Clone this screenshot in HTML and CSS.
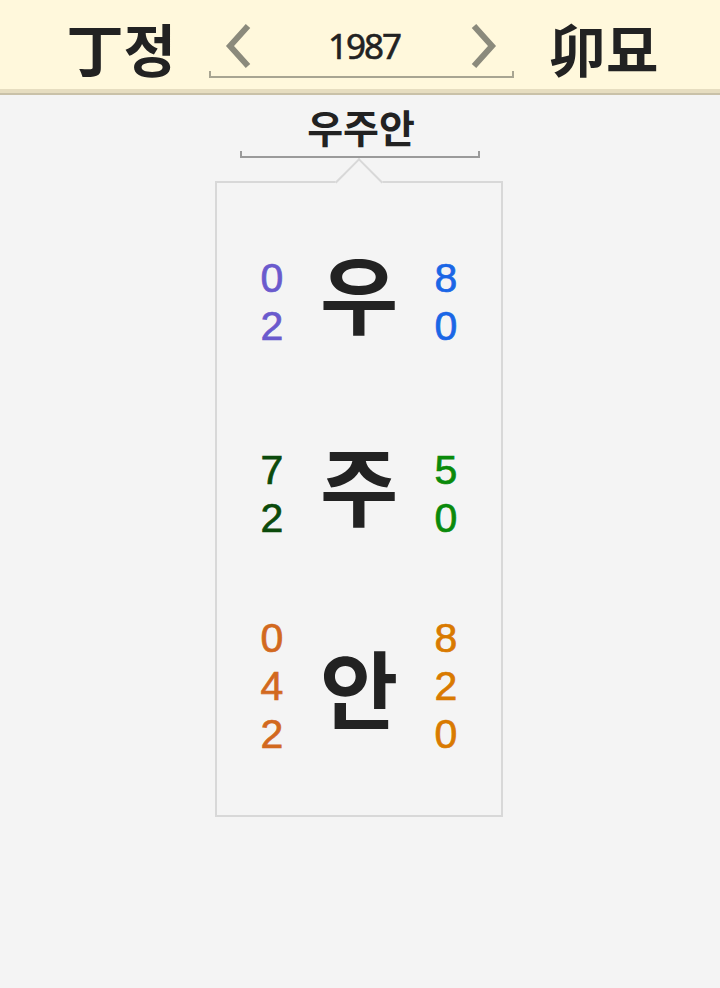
FILE: index.html
```html
<!DOCTYPE html>
<html lang="ko">
<head>
<meta charset="utf-8">
<link rel="stylesheet" href="styles.css">
</head>
<body>
<header class="top">
  <div class="gz">丁정</div>
  <div class="nav">
    <div class="nav-row">
      <svg class="chev" viewBox="0 0 28 46" width="28" height="46"><path d="M23 3 L5 23 L23 43" fill="none" stroke="#8b8a7c" stroke-width="6"/></svg>
      <span class="year">1987</span>
      <svg class="chev" viewBox="0 0 28 46" width="28" height="46"><path d="M5 3 L23 23 L5 43" fill="none" stroke="#8b8a7c" stroke-width="6"/></svg>
    </div>
    <div class="nav-bracket"></div>
  </div>
  <div class="gz">卯묘</div>
</header>
<main class="main">
  <div class="title">우주안</div>
  <div class="title-bracket"></div>
  <div class="card">
    <div class="row">
      <div class="col"><span class="c-purple">0</span><span class="c-purple">2</span></div>
      <div class="ch ch-up">우</div>
      <div class="col"><span class="c-blue">8</span><span class="c-blue">0</span></div>
    </div>
    <div class="row">
      <div class="col"><span class="c-dgreen">7</span><span class="c-dgreen">2</span></div>
      <div class="ch ch-up">주</div>
      <div class="col"><span class="c-green">5</span><span class="c-green">0</span></div>
    </div>
    <div class="row">
      <div class="col"><span class="c-orange">0</span><span class="c-orange">4</span><span class="c-orange">2</span></div>
      <div class="ch">안</div>
      <div class="col"><span class="c-amber">8</span><span class="c-amber">2</span><span class="c-amber">0</span></div>
    </div>
  </div>
</main>
</body>
</html>
```
FILE: styles.css
```css
html, body {
  margin: 0;
  padding: 0;
}
body {
  background: #f4f4f4;
  font-family: "Noto Sans", "Noto Sans CJK KR", sans-serif;
  color: #222;
  width: 720px;
  height: 988px;
  overflow: hidden;
}
.top {
  height: 89px;
  background: #fff8dc;
  display: flex;
  justify-content: center;
  align-items: center;
  padding-left: 5px;
  border-bottom: 4px solid #e6ddc0;
  box-shadow: 0 2px 0 #c9c1a8;
}
.gz {
  font-family: "Noto Sans CJK KR", sans-serif;
  font-weight: 700;
  font-size: 57px;
  line-height: 60px;
  color: #222;
  margin-top: 4px;
}
.nav {
  width: 305px;
  margin: 10px 35px 0 33px;
  display: flex;
  flex-direction: column;
}
.nav-row {
  height: 50px;
  display: flex;
  align-items: center;
  justify-content: space-between;
  padding: 0 17px 0 16px;
}
.chev {
  display: block;
}
.year {
  font-family: "Noto Sans", sans-serif;
  font-size: 35px;
  letter-spacing: -2px;
  line-height: 40px;
  color: #222;
  margin-left: 6px;
  -webkit-text-stroke: 0.6px #222;
}
.nav-bracket {
  height: 5px;
  border: 2px solid #a8a592;
  border-top: none;
}
.main {
  display: flex;
  flex-direction: column;
  align-items: center;
  padding-top: 8px;
}
.title {
  font-family: "Noto Sans CJK KR", sans-serif;
  font-weight: 700;
  font-size: 39px;
  line-height: 50px;
  color: #222;
  margin-left: 2px;
}
.title-bracket {
  width: 236px;
  height: 5px;
  border: 2px solid #9a9a9a;
  border-top: none;
}
.card {
  position: relative;
  margin-top: 23px;
  margin-left: -2px;
  width: 288px;
  height: 636px;
  border: 2px solid #d8d8d8;
  padding-top: 23px;
  box-sizing: border-box;
  display: flex;
  flex-direction: column;
}
.card::before {
  content: "";
  position: absolute;
  left: 50%;
  top: -18px;
  width: 32px;
  height: 32px;
  margin-left: -17px;
  background: #f4f4f4;
  border-top: 2px solid #d8d8d8;
  border-left: 2px solid #d8d8d8;
  transform: rotate(45deg);
}
.row {
  height: 192px;
  display: flex;
  align-items: center;
  justify-content: center;
  gap: 17px;
}
.col {
  width: 40px;
  display: flex;
  flex-direction: column;
  align-items: center;
  font-family: "Liberation Sans", sans-serif;
  font-size: 41px;
  line-height: 48px;
  -webkit-text-stroke: 0.7px currentColor;
}
.ch {
  width: 100px;
  text-align: center;
  font-family: "Noto Sans CJK KR", sans-serif;
  font-weight: 700;
  font-size: 85px;
  line-height: 100px;
  color: #222;
}
.ch-up {
  padding-bottom: 22px;
}
.c-purple { color: #6a5acd; }
.c-blue { color: #1a66e6; }
.c-dgreen { color: #0b4a0b; }
.c-green { color: #0a8a0a; }
.c-orange { color: #d2691e; }
.c-amber { color: #d97a00; }
```
